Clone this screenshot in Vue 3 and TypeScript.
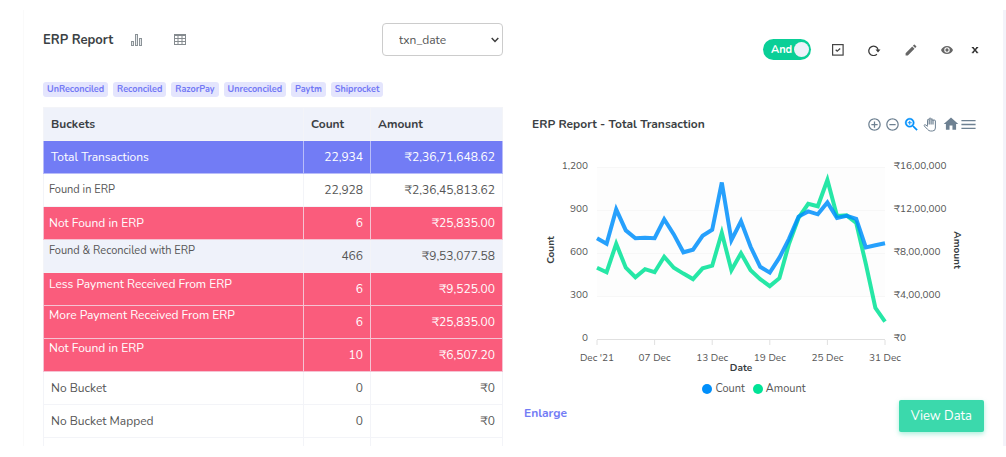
<script setup lang="ts">
import { ref } from 'vue'

type Tone = 'total' | 'plain' | 'alert' | 'soft'
type Label = 'regular' | 'note' | 'wide' | 'upper' | 'top'

interface Row {
  name: string
  count: string
  amount: string
  tone: Tone
  label: Label
}

const field = ref('txn_date')
const joinAnd = ref(true)

const tags = ['UnReconciled', 'Reconciled', 'RazorPay', 'Unreconciled', 'Paytm', 'Shiprocket']

const rows: Row[] = [
  { name: 'Total Transactions', count: '22,934', amount: '₹2,36,71,648.62', tone: 'total', label: 'regular' },
  { name: 'Found in ERP', count: '22,928', amount: '₹2,36,45,813.62', tone: 'plain', label: 'note' },
  { name: 'Not Found in ERP', count: '6', amount: '₹25,835.00', tone: 'alert', label: 'wide' },
  { name: 'Found & Reconciled with ERP', count: '466', amount: '₹9,53,077.58', tone: 'soft', label: 'upper' },
  { name: 'Less Payment Received From ERP', count: '6', amount: '₹9,525.00', tone: 'alert', label: 'upper' },
  { name: 'More Payment Received From ERP', count: '6', amount: '₹25,835.00', tone: 'alert', label: 'top' },
  { name: 'Not Found in ERP', count: '10', amount: '₹6,507.20', tone: 'alert', label: 'top' },
  { name: 'No Bucket', count: '0', amount: '₹0', tone: 'plain', label: 'regular' },
  { name: 'No Bucket Mapped', count: '0', amount: '₹0', tone: 'plain', label: 'regular' },
]

/* transactions per day */
const counts = [
  703, 664, 904, 758, 703, 706, 703, 835, 730, 605, 623, 720, 762, 1092, 689, 821, 643, 504, 463, 567, 699, 854, 890,
  870, 953, 845, 859, 838, 639, 654, 668,
]
/* rupees per day, in thousands */
const amounts = [
  663, 621, 886, 663, 575, 649, 621, 765, 663, 608, 557, 658, 682, 988, 640, 798, 640, 557, 492, 566, 886, 1127, 1257,
  1234, 1479, 1145, 1150, 1081, 700, 288, 162,
]

const plot = { left: 73, right: 361, top: 18, bottom: 190 }
const xAt = (day: number) => plot.left + (day / 30) * (plot.right - plot.left)
const yAt = (share: number) => plot.bottom - share * (plot.bottom - plot.top)
const line = (values: number[], max: number) =>
  values.map((v, i) => `${xAt(i).toFixed(1)},${yAt(v / max).toFixed(1)}`).join(' ')

const countLine = line(counts, 1200)
const amountLine = line(amounts, 1600)

const levels = [
  { share: 1, count: '1,200', amount: '₹16,00,000' },
  { share: 0.75, count: '900', amount: '₹12,00,000' },
  { share: 0.5, count: '600', amount: '₹8,00,000' },
  { share: 0.25, count: '300', amount: '₹4,00,000' },
  { share: 0, count: '0', amount: '₹0' },
]
const days = [
  { day: 0, text: "Dec '21" },
  { day: 6, text: '07 Dec' },
  { day: 12, text: '13 Dec' },
  { day: 18, text: '19 Dec' },
  { day: 24, text: '25 Dec' },
  { day: 30, text: '31 Dec' },
]
</script>

<template>
  <main class="card">
    <section class="report">
      <header class="report-head">
        <h1>ERP Report</h1>
        <button class="icon-btn" type="button" aria-label="Chart view">
          <svg width="14" height="14" viewBox="0 0 14 14" fill="#e6e9eb" stroke="#8b9297">
            <rect x="1.5" y="8.5" width="2" height="4" />
            <rect x="5.5" y="1.5" width="2" height="11" />
            <rect x="9.5" y="5.5" width="2" height="7" />
          </svg>
        </button>
        <button class="icon-btn" type="button" aria-label="Table view">
          <svg width="12" height="12" viewBox="0 0 12 12" fill="none" stroke="#858b8f">
            <rect x="0.5" y="0.5" width="11" height="10" />
            <path d="M.5 1.500h11M.5 4.500h11M.5 7.500h11M4 1v9.500M8 1v9.500" />
          </svg>
        </button>
        <div class="picker">
          <select v-model="field" aria-label="Date field">
            <option>txn_date</option>
          </select>
          <svg width="8" height="6" viewBox="0 0 8 6" fill="none" stroke="#3c3c3c" stroke-width="1.500">
            <path d="M.7 1 4 4.400 7.300 1" />
          </svg>
        </div>
      </header>

      <ul class="tags">
        <li v-for="tag in tags" :key="tag">{{ tag }}</li>
      </ul>

      <table>
        <colgroup>
          <col />
          <col class="col-count" />
          <col class="col-amount" />
        </colgroup>
        <thead>
          <tr>
            <th scope="col">Buckets</th>
            <th scope="col">Count</th>
            <th scope="col">Amount</th>
          </tr>
        </thead>
        <tbody>
          <tr v-for="(row, i) in rows" :key="i" :class="row.tone">
            <td :class="row.label">{{ row.name }}</td>
            <td class="num">{{ row.count }}</td>
            <td class="num">{{ row.amount }}</td>
          </tr>
          <tr class="rest">
            <td></td>
            <td></td>
            <td></td>
          </tr>
        </tbody>
      </table>
    </section>

    <section class="visual">
      <div class="actions">
        <label class="toggle">
          <input v-model="joinAnd" type="checkbox" />
          <span>And</span>
          <i></i>
        </label>
        <button class="icon-btn" type="button" aria-label="Select">
          <svg width="12" height="12" viewBox="0 0 12 12" fill="none" stroke="#444">
            <rect x="0.6" y="0.6" width="10.500" height="10.500" stroke-width="1.200" />
            <path d="m3.700 5.800 1.500 1.400L8.200 4.500" stroke-width="1.300" />
          </svg>
        </button>
        <button class="icon-btn" type="button" aria-label="Refresh">
          <svg width="13" height="12" viewBox="0 0 13 12">
            <path d="M8.900 10.100A4.700 4.700 0 1 1 10.100 5.800" fill="none" stroke="#3a3a3a" stroke-width="1.300" />
            <path d="M7.500 5.500h5L10 8.600z" fill="#3a3a3a" />
          </svg>
        </button>
        <button class="icon-btn" type="button" aria-label="Edit">
          <svg width="12" height="12" viewBox="2 2 20 20" fill="#666">
            <path
              d="M3 17.250V21h3.750L17.810 9.940l-3.750-3.750L3 17.250zM20.710 7.040a1 1 0 0 0 0-1.410l-2.340-2.340a1 1 0 0 0-1.410 0l-1.830 1.830 3.750 3.750 1.830-1.830z"
            />
          </svg>
        </button>
        <button class="icon-btn" type="button" aria-label="Preview">
          <svg width="12" height="12" viewBox="1 1 22 22" fill="#666">
            <path
              d="M12 4.500C7 4.500 2.730 7.610 1 12c1.730 4.390 6 7.500 11 7.500s9.270-3.110 11-7.500c-1.730-4.390-6-7.500-11-7.500zM12 17a5 5 0 1 1 0-10 5 5 0 0 1 0 10zm0-8a3 3 0 1 0 0 6 3 3 0 0 0 0-6z"
            />
          </svg>
        </button>
        <button class="icon-btn close" type="button" aria-label="Close">
          <svg width="8" height="8" viewBox="0 0 8 8" fill="none" stroke="#333">
            <path d="m1.800 1.500 4.400 5M6.200 1.500l-4.400 5" stroke-width="1.500" />
            <path d="M.8 1.500h1.900M5.300 1.500h1.900M.8 6.700h1.900M5.300 6.700h1.900" />
          </svg>
        </button>
      </div>

      <div class="chart-head">
        <h2>ERP Report - Total Transaction</h2>
        <div class="tools">
          <button class="icon-btn" type="button" aria-label="Zoom in">
            <svg width="15" height="15" viewBox="0 0 24 24" fill="#6e8192">
              <path
                d="M13 7h-2v4H7v2h4v4h2v-4h4v-2h-4V7zm-1-5C6.480 2 2 6.480 2 12s4.480 10 10 10 10-4.480 10-10S17.520 2 12 2zm0 18c-4.410 0-8-3.590-8-8s3.590-8 8-8 8 3.590 8 8-3.590 8-8 8z"
              />
            </svg>
          </button>
          <button class="icon-btn" type="button" aria-label="Zoom out">
            <svg width="15" height="15" viewBox="0 0 24 24" fill="#6e8192">
              <path
                d="M7 11v2h10v-2H7zm5-9C6.480 2 2 6.480 2 12s4.480 10 10 10 10-4.480 10-10S17.520 2 12 2zm0 18c-4.410 0-8-3.590-8-8s3.590-8 8-8 8 3.590 8 8-3.590 8-8 8z"
              />
            </svg>
          </button>
          <button class="icon-btn" type="button" aria-label="Selection zoom">
            <svg width="17" height="17" viewBox="0 0 24 24" fill="#008ffb" stroke="#008ffb" stroke-width="0.500">
              <path
                d="M15.500 14h-.79l-.28-.27C15.410 12.590 16 11.110 16 9.500 16 5.910 13.090 3 9.500 3S3 5.910 3 9.500 5.910 16 9.500 16c1.610 0 3.090-.59 4.230-1.570l.27.28v.79l5 4.990L20.490 19l-4.990-5zm-6 0C7.010 14 5 11.990 5 9.500S7.010 5 9.500 5 14 7.010 14 9.500 11.990 14 9.500 14z"
              />
              <path d="M12 10h-2v2H9v-2H7V9h2V7h1v2h2v1z" />
            </svg>
          </button>
          <button class="icon-btn" type="button" aria-label="Pan">
            <svg width="14" height="15" viewBox="0 0 14 15" fill="#fff" stroke="#6e8192" stroke-linejoin="round">
              <path
                d="M4.500 8.500V3.200q0-.9.8-.9t.9.9V2q0-1 .9-1t.9 1v.7q0-.9.9-.9t.9.9v1.200q0-.9 1.300-.9t1.300.9V11q0 3-3 3H7.500Q5.800 14 4.500 12.300L1.200 8.900q-.3-.8.5-1.200 1-.2 2.800 1.600z"
              />
              <path d="M6.200 3v4.500M8.100 2.500v5M10 3.500v4" stroke-width="1.200" />
            </svg>
          </button>
          <button class="icon-btn home" type="button" aria-label="Reset zoom">
            <svg width="16" height="16" viewBox="1 1 22 22" fill="#6e8192">
              <path d="M10 20v-6h4v6h5v-8h3L12 3 2 12h3v8z" />
            </svg>
          </button>
          <button class="icon-btn" type="button" aria-label="Menu">
            <svg width="17" height="17" viewBox="0 0 24 24" fill="#6e8192">
              <path d="M2 18.500h20v-2H2v2zm0-5.500h20v-2H2v2zm0-7.500v2h20v-2H2z" />
            </svg>
          </button>
        </div>
      </div>

      <svg class="chart" viewBox="0 0 460 226" role="img" aria-label="Count and amount by date">
        <rect x="73" y="18" width="288" height="129" fill="#fdfdfd" />
        <g stroke="#f7f7f7">
          <line v-for="l in levels" :key="l.count" x1="73" x2="361" :y1="yAt(l.share) + 0.5" :y2="yAt(l.share) + 0.5" />
        </g>
        <g stroke="#e0e0e0">
          <path d="M73 190.500H361" />
          <line v-for="d in days" :key="d.day" :x1="xAt(d.day)" :x2="xAt(d.day)" y1="191" y2="196" />
        </g>
        <g class="tick">
          <template v-for="l in levels" :key="l.count">
            <text x="64" :y="yAt(l.share) + 2" text-anchor="end">{{ l.count }}</text>
            <text x="370" :y="yAt(l.share) + 2">{{ l.amount }}</text>
          </template>
        </g>
        <g class="day">
          <text v-for="d in days" :key="d.day" :x="xAt(d.day)" y="212" text-anchor="middle">{{ d.text }}</text>
        </g>
        <g class="axis" text-anchor="middle">
          <text transform="translate(30 101) rotate(-90)">Count</text>
          <text transform="translate(430 101) rotate(90)">Amount</text>
          <text x="217" y="222">Date</text>
        </g>
        <g fill="none" stroke-width="4" stroke-opacity="0.85">
          <polyline :points="amountLine" stroke="#00e396" />
          <polyline :points="countLine" stroke="#008ffb" />
        </g>
      </svg>

      <div class="legend">
        <span><i class="dot count"></i>Count</span>
        <span><i class="dot amount"></i>Amount</span>
      </div>

      <footer>
        <a href="#enlarge">Enlarge</a>
        <button class="view" type="button">View Data</button>
      </footer>
    </section>
  </main>
</template>

<style>
body {
  margin: 0;
  background: #fff;
}
</style>

<style scoped>
.card {
  box-sizing: border-box;
  display: grid;
  grid-template-columns: minmax(0, 1fr) minmax(0, 1fr);
  gap: 21px;
  margin: 10px 0 11px 23px;
  padding: 0 19px;
  border-left: 1px solid #fafafa;
  border-right: 3px solid #f3f3fa;
  color: #3b3f44;
  font-family: Nunito, Lato, 'Noto Sans', sans-serif;
  font-size: 12px;
  line-height: 18px;
}

h1,
h2 {
  margin: 0;
  font-size: 13px;
  font-weight: 700;
}

h2 {
  font-size: 12px;
}

button,
select {
  font: inherit;
}

.icon-btn {
  display: flex;
  align-items: center;
  justify-content: center;
  padding: 0;
  border: 0;
  background: none;
}

.report-head {
  display: flex;
  align-items: center;
  gap: 30px;
  padding-top: 13px;
}

.report-head h1 {
  margin-right: -13px;
}

.picker {
  position: relative;
  width: 121px;
  margin-left: auto;
}

.picker select {
  display: block;
  width: 100%;
  height: 33px;
  padding: 0 16px;
  border: 1px solid #ccc;
  border-radius: 4px;
  appearance: none;
  background: #fff;
  color: #555;
}

.picker svg {
  position: absolute;
  top: 14px;
  right: 4px;
  pointer-events: none;
}

.tags {
  display: flex;
  gap: 5px;
  margin: 26px 0 10px;
  padding: 0;
  list-style: none;
}

.tags li {
  padding: 0 4px;
  border-radius: 3px;
  background: #e4e5fd;
  color: #7278f5;
  font-size: 9px;
  font-weight: 700;
  line-height: 15px;
}

table {
  width: 100%;
  border-collapse: collapse;
  table-layout: fixed;
}

.col-count {
  width: 67px;
}

.col-amount {
  width: 132px;
}

th,
td {
  box-sizing: border-box;
  height: 33px;
  padding: 0 7px;
  border: 1px solid #f3f4f8;
}

th {
  background: #eff2fa;
  text-align: left;
  font-weight: 700;
}

td {
  color: #555;
}

.num {
  text-align: right;
}

.total td,
.alert td {
  border-color: #f5c3d3;
  color: #fff;
}

.total td {
  border-color: #b9bdf9;
  background: #727cf5;
}

.alert td {
  background: #fa5c7c;
}

.soft td {
  background: #eff2fa;
}

td.note,
td.upper {
  font-size: 11px;
}

td.note,
td.wide,
td.upper,
td.top {
  padding-left: 5px;
}

.alert td.upper {
  font-size: 12px;
}

td.upper,
td.top {
  padding-top: 2px;
  vertical-align: top;
}

td.top {
  padding-top: 0;
}

.rest td {
  height: 8px;
  border-bottom: 0;
}

.visual {
  display: flex;
  flex-direction: column;
}

.actions {
  display: flex;
  align-items: center;
  justify-content: flex-end;
  gap: 24px;
  margin-top: 29px;
  padding-right: 5px;
}

.actions .close {
  margin-left: -6px;
}

.toggle {
  display: flex;
  align-items: center;
  gap: 2px;
  box-sizing: border-box;
  width: 48px;
  height: 21px;
  margin-right: -3px;
  padding: 0 3px 0 8px;
  border-radius: 11px;
  background: #0acf97;
  color: #fff;
  font-size: 11px;
  font-weight: 700;
}

.toggle input {
  position: absolute;
  opacity: 0;
}

.toggle i {
  flex: none;
  width: 15px;
  height: 15px;
  margin-left: auto;
  border-radius: 50%;
  background: #eef2fa;
}

.chart-head {
  display: flex;
  align-items: center;
  justify-content: space-between;
  margin-top: 55px;
  padding: 0 7px 0 8px;
}

.tools {
  display: flex;
  align-items: center;
  gap: 3px;
}

.tools .home {
  margin: 0 -2px 0 3px;
}

.chart {
  display: block;
  width: 100%;
  margin-top: 16px;
}

.tick,
.day,
.axis {
  font-size: 10px;
  fill: #555;
}

.axis {
  font-weight: 700;
  fill: #373d3f;
}

.legend {
  display: flex;
  justify-content: center;
  gap: 8px;
  margin-top: 5px;
  font-size: 11px;
  color: #555;
}

.legend span {
  display: flex;
  align-items: center;
  gap: 3px;
}

.dot {
  width: 10px;
  height: 10px;
  border-radius: 50%;
}

.dot.count {
  background: #008ffb;
}

.dot.amount {
  background: #00e396;
}

footer {
  display: flex;
  align-items: flex-start;
  justify-content: space-between;
  margin-top: 2px;
}

footer a {
  margin-top: 4px;
  color: #727cf5;
  font-weight: 700;
  text-decoration: none;
}

.view {
  height: 32px;
  padding: 0 12px;
  border: 0;
  border-radius: 2px;
  background: #3bd9ac;
  box-shadow: 0 2px 5px rgba(10, 207, 151, 0.35);
  color: #fff;
  font-size: 13px;
}
</style>
